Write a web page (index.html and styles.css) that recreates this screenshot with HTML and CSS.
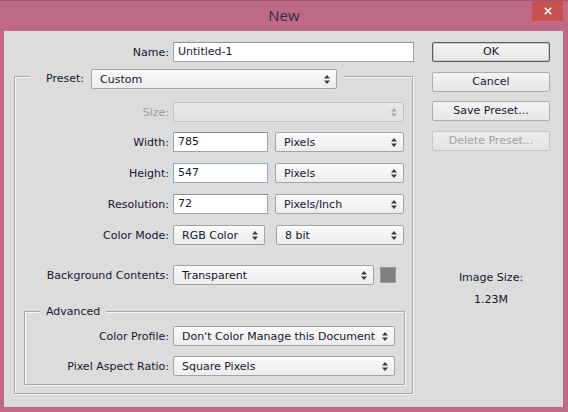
FILE: index.html
```html
<!DOCTYPE html>
<html>
<head>
<meta charset="utf-8">
<link rel="stylesheet" href="styles.css">
</head>
<body>
<div class="window">
  <div class="titlebar">
    <span class="title">New</span>
    <div class="close"><svg width="10" height="10" viewBox="0 0 10 10"><path d="M1 1 L9 9 M9 1 L1 9" stroke="#fff" stroke-width="2"/></svg></div>
  </div>
  <div class="client">
    <div class="left">
      <div class="row name-row">
        <label class="lbl lbl-name">Name:</label>
        <div class="input w-name">Untitled-1</div>
      </div>
      <div class="group">
        <div class="group-head">
          <label class="lbl-preset">Preset:</label>
          <div class="select w-preset"><span>Custom</span><svg class="arr" width="6" height="9" viewBox="0 0 6 9"><polygon points="0,3.5 3,0 6,3.5"/><polygon points="0,5.5 3,9 6,5.5"/></svg></div>
        </div>
        <div class="row r-size">
          <label class="lbl disabled">Size:</label>
          <div class="select w-size is-disabled"><span></span><svg class="arr" width="6" height="9" viewBox="0 0 6 9"><polygon points="0,3.5 3,0 6,3.5"/><polygon points="0,5.5 3,9 6,5.5"/></svg></div>
        </div>
        <div class="row r-gap10">
          <label class="lbl">Width:</label>
          <div class="input w-num">785</div>
          <div class="select w-unit"><span>Pixels</span><svg class="arr" width="6" height="9" viewBox="0 0 6 9"><polygon points="0,3.5 3,0 6,3.5"/><polygon points="0,5.5 3,9 6,5.5"/></svg></div>
        </div>
        <div class="row r-gap11">
          <label class="lbl">Height:</label>
          <div class="input w-num focus">547</div>
          <div class="select w-unit"><span>Pixels</span><svg class="arr" width="6" height="9" viewBox="0 0 6 9"><polygon points="0,3.5 3,0 6,3.5"/><polygon points="0,5.5 3,9 6,5.5"/></svg></div>
        </div>
        <div class="row r-gap11">
          <label class="lbl">Resolution:</label>
          <div class="input w-num">72</div>
          <div class="select w-unit"><span>Pixels/Inch</span><svg class="arr" width="6" height="9" viewBox="0 0 6 9"><polygon points="0,3.5 3,0 6,3.5"/><polygon points="0,5.5 3,9 6,5.5"/></svg></div>
        </div>
        <div class="row r-gap11 gap-mode">
          <label class="lbl">Color Mode:</label>
          <div class="select w-mode"><span>RGB Color</span><svg class="arr" width="6" height="9" viewBox="0 0 6 9"><polygon points="0,3.5 3,0 6,3.5"/><polygon points="0,5.5 3,9 6,5.5"/></svg></div>
          <div class="select w-bit"><span>8 bit</span><svg class="arr" width="6" height="9" viewBox="0 0 6 9"><polygon points="0,3.5 3,0 6,3.5"/><polygon points="0,5.5 3,9 6,5.5"/></svg></div>
        </div>
        <div class="row r-bg">
          <label class="lbl">Background Contents:</label>
          <div class="select w-bgc"><span>Transparent</span><svg class="arr" width="6" height="9" viewBox="0 0 6 9"><polygon points="0,3.5 3,0 6,3.5"/><polygon points="0,5.5 3,9 6,5.5"/></svg></div>
          <div class="swatch"></div>
        </div>
        <div class="adv">
          <div class="adv-head"><span>Advanced</span></div>
          <div class="row a-first">
            <label class="lbl lbl-adv">Color Profile:</label>
            <div class="select w-adv"><span>Don't Color Manage this Document</span><svg class="arr" width="6" height="9" viewBox="0 0 6 9"><polygon points="0,3.5 3,0 6,3.5"/><polygon points="0,5.5 3,9 6,5.5"/></svg></div>
          </div>
          <div class="row r-gap10">
            <label class="lbl lbl-adv">Pixel Aspect Ratio:</label>
            <div class="select w-adv"><span>Square Pixels</span><svg class="arr" width="6" height="9" viewBox="0 0 6 9"><polygon points="0,3.5 3,0 6,3.5"/><polygon points="0,5.5 3,9 6,5.5"/></svg></div>
          </div>
        </div>
      </div>
    </div>
    <div class="right">
      <div class="btn default">OK</div>
      <div class="btn b-gap10">Cancel</div>
      <div class="btn b-gap9">Save Preset...</div>
      <div class="btn b-gap10 btn-disabled">Delete Preset...</div>
      <div class="imgsize">
        <div class="is-label">Image Size:</div>
        <div class="is-value">1.23M</div>
      </div>
    </div>
  </div>
</div>
</body>
</html>
```

FILE: styles.css
```css
* { box-sizing: border-box; }
html, body { margin: 0; padding: 0; }
body {
  width: 568px;
  height: 412px;
  background: #be6a87;
  font-family: "DejaVu Sans", Verdana, sans-serif;
  font-size: 11px;
  color: #16162e;
  overflow: hidden;
}
.window {
  width: 568px;
  height: 412px;
  display: flex;
  flex-direction: column;
  border-top: 1px solid #a8506e;
}
.titlebar {
  position: relative;
  height: 30px;
  display: flex;
  align-items: center;
  justify-content: center;
}
.title {
  font-family: "Open Sans", "Noto Sans", sans-serif;
  font-size: 15px;
  color: #2e2a3c;
  margin-top: -2px;
}
.close {
  position: absolute;
  top: 0;
  right: 5px;
  width: 31px;
  height: 20px;
  background: #c75050;
  display: flex;
  align-items: center;
  justify-content: center;
}
.close svg { width: 8px; height: 8px; }
.client {
  margin: 0 5px 0 4px;
  height: 376px;
  background: #dcdcdc;
  display: flex;
  padding: 11px 0 0 10px;
}
.left { width: 400px; }
.row {
  display: flex;
  align-items: center;
  height: 20px;
}
.lbl {
  width: 154px;
  text-align: right;
  margin-right: 4px;
  white-space: nowrap;
}
.lbl-name { width: 155px; }
.lbl-adv { width: 144px; }
.disabled { color: #9c9c9c; }
.input {
  height: 20px;
  background: #fff;
  border: 1px solid #a3a3a3;
  border-top-color: #8e8e8e;
  padding: 0 4px;
  line-height: 18px;
  white-space: nowrap;
}
.input.focus { border-color: #86a9d6; }
.w-name { width: 241px; }
.w-num { width: 95px; }
.select {
  height: 20px;
  display: flex;
  align-items: center;
  justify-content: space-between;
  border: 1px solid #a4a4a4;
  border-radius: 2px;
  background: linear-gradient(#fbfbfb, #ececec);
  padding: 0 6px 0 8px;
  white-space: nowrap;
}
.select .arr { fill: #3c3c3c; flex: none; }
.select.is-disabled { border-color: #c4c4c4; background: linear-gradient(#e9e9e9, #e2e2e2); }
.select.is-disabled .arr { fill: #a8a8a8; }
.w-unit { width: 129px; margin-left: 7px; }
.w-size { width: 231px; }
.w-mode { width: 92px; }
.w-bit { width: 128px; margin-left: 11px; }
.w-bgc { width: 201px; }
.w-adv { width: 222px; }
.w-preset { width: 246px; }
.swatch {
  width: 16px;
  height: 16px;
  margin-left: 6px;
  background: #808080;
  border: 1px solid #9a9a9a;
}
.group {
  margin-top: 14px;
  width: 399px;
  height: 318px;
  border: 1px solid #a9a9a9;
  box-shadow: inset 1px 1px 0 #f6f6f6, 1px 1px 0 #f6f6f6;
  padding: 0 7px 0 9px;
}
.group-head {
  display: inline-flex;
  align-items: center;
  margin-top: -8px;
  margin-left: 6px;
  height: 20px;
  padding-right: 7px;
  background: #dcdcdc;
  vertical-align: top;
}
.lbl-preset {
  padding: 0 7px 0 16px;
  line-height: 20px;
}
.r-size { margin-top: 12px; }
.r-size .lbl, .r-gap10 .lbl, .r-gap11 .lbl, .r-bg .lbl { width: 145px; }
.adv .r-gap10 .lbl { width: 144px; }
.r-gap10 { margin-top: 10px; }
.r-gap11 { margin-top: 11px; }
.r-bg { margin-top: 20px; }
.adv {
  margin-top: 26px;
  height: 74px;
  border: 1px solid #a9a9a9;
  box-shadow: inset 1px 1px 0 #f6f6f6, 1px 1px 0 #f6f6f6;
}
.adv-head {
  height: 0;
  display: flex;
  align-items: center;
  padding-left: 15px;
}
.adv-head span {
  background: #dcdcdc;
  padding: 0 6px;
  line-height: 14px;
}
.a-first { margin-top: 14px; }
.right {
  margin-left: 18px;
  width: 118px;
  display: flex;
  flex-direction: column;
}
.btn {
  height: 20px;
  border: 1px solid #acacac;
  border-radius: 2px;
  background: linear-gradient(#f4f4f4, #e6e6e6);
  text-align: center;
  line-height: 18px;
}
.btn.default { border: 1px solid #5c5c5c; box-shadow: inset 0 0 0 1px #c8c8c8; }
.b-gap10 { margin-top: 10px; }
.b-gap9 { margin-top: 9px; }
.btn-disabled { color: #a2a2a2; border-color: #c6c6c6; background: linear-gradient(#ececec, #e4e4e4); }
.imgsize {
  margin-top: 116px;
  text-align: center;
  line-height: 22px;
}
```
